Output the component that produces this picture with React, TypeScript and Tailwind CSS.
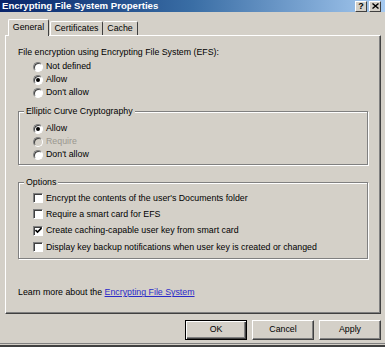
import type { ReactNode } from "react";

type RadioProps = { label: string; checked?: boolean; disabled?: boolean };

const Radio = ({ label, checked, disabled }: RadioProps) => (
	<div className="flex h-[13px] items-center pl-[15px]">
		<span
			className={`relative flex h-[10px] w-[10px] items-center justify-center rounded-full border border-t-[#808080] border-l-[#808080] border-r-white border-b-white shadow-[inset_1px_1px_0_#404040] ${
				disabled ? "bg-[#d4d0c8]" : "bg-white"
			}`}
		>
			{checked && <span className="h-[4px] w-[4px] rounded-full bg-black" />}
		</span>
		<span className={`ml-[3px] ${disabled ? "text-[#9a978f]" : "text-black"}`}>{label}</span>
	</div>
);

type CheckboxProps = { label: string; checked?: boolean };

const Checkbox = ({ label, checked }: CheckboxProps) => (
	<div className="flex h-[16.33px] items-center pl-[15px]">
		<span className="flex h-[10px] w-[10px] items-center justify-center border border-t-[#808080] border-l-[#808080] border-r-white border-b-white bg-white shadow-[inset_1px_1px_0_#404040]">
			{checked && (
				<svg width="7" height="7" viewBox="0 0 7 7">
					<path d="M0.5 3 L2.5 5 L6.5 1" stroke="black" strokeWidth="1.6" fill="none" />
				</svg>
			)}
		</span>
		<span className="ml-[3px]">{label}</span>
	</div>
);

type GroupBoxProps = { title: string; className?: string; children: ReactNode };

const GroupBox = ({ title, className, children }: GroupBoxProps) => (
	<fieldset
		className={`mr-[12px] border border-[#808080] shadow-[inset_1px_1px_0_white,1px_1px_0_white] ${className ?? ""}`}
	>
		<legend className="ml-[5px] bg-[#d4d0c8] px-[2px] leading-[13px]">{title}</legend>
		{children}
	</fieldset>
);

type ButtonProps = { label: string; isDefault?: boolean };

const Button = ({ label, isDefault }: ButtonProps) => (
	<button
		className={`flex h-[20px] w-[62px] items-center justify-center bg-[#d4d0c8] ${
			isDefault
				? "border border-black shadow-[inset_1px_1px_0_white,inset_-1px_-1px_0_#404040,inset_-2px_-2px_0_#808080]"
				: "border border-t-white border-l-white border-r-[#404040] border-b-[#404040] shadow-[inset_-1px_-1px_0_#808080]"
		}`}
	>
		{label}
	</button>
);

export default function App() {
	return (
		<div className="flex h-[347px] w-[385px] flex-col overflow-hidden bg-[#d4d0c8] font-['Liberation_Sans',Arial,sans-serif] text-[8.8px] text-black">
			{/* title bar */}
			<div className="flex h-[12px] items-center justify-between bg-gradient-to-r from-[#0a246a] via-[#3a6ea5] to-[#a6caf0] pl-[2px] pr-[4px]">
				<span className="text-[9.6px] font-bold leading-[12px] text-white">Encrypting File System Properties</span>
				<div className="flex gap-[2px]">
					<span className="flex h-[11px] w-[12px] items-center justify-center border border-t-white border-l-white border-r-[#404040] border-b-[#404040] bg-[#d4d0c8] text-[9px] font-bold leading-none">
						?
					</span>
					<span className="flex h-[11px] w-[12px] items-center justify-center border border-t-white border-l-white border-r-[#404040] border-b-[#404040] bg-[#d4d0c8]">
						<svg width="7" height="6" viewBox="0 0 7 6">
							<path d="M0.5 0.5 L6.5 5.5 M6.5 0.5 L0.5 5.5" stroke="black" strokeWidth="1.4" />
						</svg>
					</span>
				</div>
			</div>

			{/* tabs */}
			<div className="mt-[7px] flex h-[16px] items-end pl-[8px]">
				<div className="relative z-10 mb-[-1px] flex h-[17px] w-[41px] items-center justify-center rounded-t-[2px] border-t border-l border-r border-t-white border-l-white border-r-[#404040] bg-[#d4d0c8] pb-[1px]">
					General
				</div>
				<div className="ml-[1px] flex h-[14px] w-[53px] items-center justify-center rounded-t-[2px] border-t border-l border-r border-t-white border-l-white border-r-[#404040]">
					Certificates
				</div>
				<div className="flex h-[14px] w-[35px] items-center justify-center rounded-t-[2px] border-t border-r border-t-white border-r-[#404040]">
					Cache
				</div>
			</div>

			{/* tab panel */}
			<div className="ml-[5px] flex h-[279px] w-[376px] flex-col border border-t-white border-l-white border-r-[#404040] border-b-[#404040] pl-[12px] pt-[10px] shadow-[inset_-1px_-1px_0_#808080]">
				<div className="leading-[13px]">File encryption using Encrypting File System (EFS):</div>
				<div className="mt-[1px]">
					<Radio label="Not defined" />
					<Radio label="Allow" checked />
					<Radio label="Don't allow" />
				</div>

				<GroupBox title="Elliptic Curve Cryptography" className="mt-[6px] pb-[3px] pt-[4px]">
					<div className="-ml-[1px]">
						<Radio label="Allow" checked />
						<Radio label="Require" disabled />
						<Radio label="Don't allow" />
					</div>
				</GroupBox>

				<GroupBox title="Options" className="mt-[11px] pb-[3px] pt-[1px]">
					<div className="-ml-[1px]">
						<Checkbox label="Encrypt the contents of the user's Documents folder" />
						<Checkbox label="Require a smart card for EFS" />
						<Checkbox label="Create caching-capable user key from smart card" checked />
						<Checkbox label="Display key backup notifications when user key is created or changed" />
					</div>
				</GroupBox>

				<div className="mt-[27px] leading-[13px]">
					Learn more about the{" "}
					<a href="#" className="text-[#2a2ac8] underline">
						Encrypting File System
					</a>
				</div>
			</div>

			{/* buttons */}
			<div className="mt-[6px] flex justify-end gap-[5px] pr-[4px]">
				<Button label="OK" isDefault />
				<Button label="Cancel" />
				<Button label="Apply" />
			</div>

			<div className="mt-[3px] flex-1 border-t border-[#808080] bg-[#d4d0c8] shadow-[inset_0_-2px_0_#404040]" />
		</div>
	);
}
